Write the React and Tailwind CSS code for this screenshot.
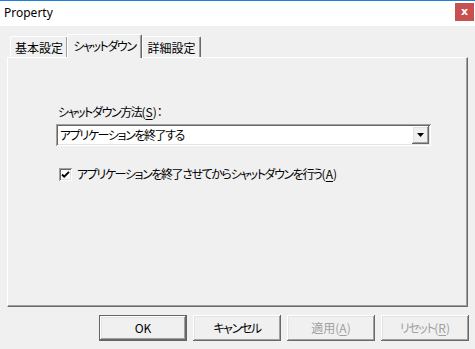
import React from "react";

const jp = "font-['Noto_Sans_CJK_JP',sans-serif] [font-feature-settings:'palt']";
const tight = "tracking-[-1.4px]";

const raised =
  "shadow-[inset_-1px_-1px_0_#696969,inset_1px_1px_0_#ffffff,inset_-2px_-2px_0_#a0a0a0,inset_2px_2px_0_#e3e3e3]";
const sunken =
  "shadow-[inset_1px_1px_0_#a0a0a0,inset_-1px_-1px_0_#ffffff,inset_2px_2px_0_#696969,inset_-2px_-2px_0_#e3e3e3]";

function Key({ k }) {
  return (
    <span className="tracking-normal">
      (<span className="underline underline-offset-2">{k}</span>)
    </span>
  );
}

function Tab({ label, active, className = "" }) {
  return (
    <div
      className={`flex justify-center ${jp} text-[12px] text-black border-t border-l border-white shadow-[inset_-1px_0_0_#a0a0a0] border-r border-r-[#696969] rounded-t-[2px] ${
        active
          ? "h-[24px] pt-[2px] bg-[#f0f0f0] relative z-10 -mb-px"
          : "h-[21px] pt-[2px] bg-[#f0f0f0]"
      } ${className}`}
    >
      {label}
    </div>
  );
}

function Button({ children, primary, disabled }) {
  return (
    <div
      className={`w-[88px] h-[26px] ${primary ? "border border-[#646464]" : ""}`}
    >
      <div
        className={`w-full h-full flex items-center justify-center bg-[#f0f0f0] ${raised} ${jp} text-[12px] ${
          disabled ? "text-[#a0a0a0]" : "text-black"
        }`}
      >
        {children}
      </div>
    </div>
  );
}

export default function App() {
  return (
    <div className="w-[475px] h-[349px] bg-[#f0f0f0] border-t border-[#1e7fd6] flex flex-col overflow-hidden">
      <div className="h-[25px] bg-white flex justify-between">
        <div className="pl-[4px] pt-[4px] font-['Noto_Sans',sans-serif] text-[12px] leading-[16px] text-black">
          Property
        </div>
        <div className="mt-[2px] mr-px w-[19px] h-[18px] bg-[#c75050] flex items-center justify-center text-white text-[11px] font-bold font-['DejaVu_Sans',sans-serif] leading-none pb-[2px]">
          x
        </div>
      </div>

      <div className="px-[7px] pt-[7px]">
        <div className="flex items-end h-[24px] pl-[3px]">
          <Tab label="基本設定" className="w-[58px]" />
          <Tab label="シャットダウン" active className={`w-[75px] -ml-px ${tight}`} />
          <Tab label="詳細設定" className="w-[59px]" />
        </div>
        <div className="h-[250px] border-t border-l border-white border-r border-b border-r-[#696969] border-b-[#696969] shadow-[inset_-1px_-1px_0_#a0a0a0] pl-[48px] pt-[45px]">
          <div className={`${jp} ${tight} text-[12px] leading-[18px] text-black pl-[2px]`}>
            シャットダウン方法<Key k="S" />：
          </div>
          <div className={`mt-[3px] w-[375px] h-[22px] bg-white ${sunken} flex items-center p-[2px]`}>
            <div className={`flex-1 pl-[2px] ${jp} ${tight} text-[12px] text-black leading-[18px]`}>
              アプリケーションを終了する
            </div>
            <div className={`w-[17px] h-[18px] bg-[#f0f0f0] ${raised} flex items-center justify-center`}>
              <svg width="7" height="4" viewBox="0 0 7 4">
                <path d="M0 0h7L3.5 4z" fill="#000" />
              </svg>
            </div>
          </div>
          <div className="mt-[19px] flex items-center pl-[3px]">
            <div className={`w-[13px] h-[13px] bg-white ${sunken} flex items-center justify-center`}>
              <svg width="9" height="9" viewBox="0 0 9 9">
                <path d="M1 4.5l2.2 2.2L8 1.8" stroke="#000" strokeWidth="1.8" fill="none" />
              </svg>
            </div>
            <div className={`ml-[5px] ${jp} ${tight} text-[12px] leading-[18px] text-black`}>
              アプリケーションを終了させてからシャットダウンを行う<Key k="A" />
            </div>
          </div>
        </div>
      </div>

      <div className="flex justify-end gap-[6px] pr-[6px] mt-[8px]">
        <Button primary>OK</Button>
        <Button>
          <span className={tight}>キャンセル</span>
        </Button>
        <Button disabled>
          適用<Key k="A" />
        </Button>
        <Button disabled>
          <span className={tight}>
            リセット<Key k="R" />
          </span>
        </Button>
      </div>
    </div>
  );
}
